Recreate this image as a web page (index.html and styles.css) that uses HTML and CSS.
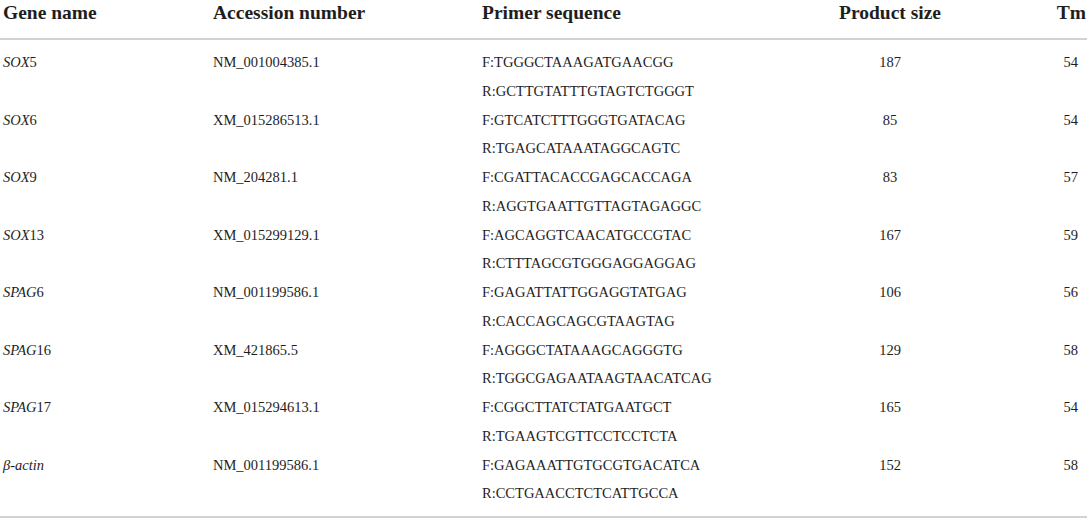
FILE: index.html
```html
<!DOCTYPE html>
<html>
<head>
<meta charset="utf-8">
<link rel="stylesheet" href="styles.css">
</head>
<body>
<div class="tbl">
  <div class="row head">
    <div class="c1">Gene name</div>
    <div class="c2">Accession number</div>
    <div class="c3">Primer sequence</div>
    <div class="c4">Product size</div>
    <div class="c5">Tm</div>
  </div>
  <div class="body">
    <div class="row">
      <div class="c1"><i>SOX</i>5</div>
      <div class="c2">NM_001004385.1</div>
      <div class="c3"><div>F:TGGGCTAAAGATGAACGG</div><div>R:GCTTGTATTTGTAGTCTGGGT</div></div>
      <div class="c4">187</div>
      <div class="c5">54</div>
    </div>
    <div class="row">
      <div class="c1"><i>SOX</i>6</div>
      <div class="c2">XM_015286513.1</div>
      <div class="c3"><div>F:GTCATCTTTGGGTGATACAG</div><div>R:TGAGCATAAATAGGCAGTC</div></div>
      <div class="c4">85</div>
      <div class="c5">54</div>
    </div>
    <div class="row">
      <div class="c1"><i>SOX</i>9</div>
      <div class="c2">NM_204281.1</div>
      <div class="c3"><div>F:CGATTACACCGAGCACCAGA</div><div>R:AGGTGAATTGTTAGTAGAGGC</div></div>
      <div class="c4">83</div>
      <div class="c5">57</div>
    </div>
    <div class="row">
      <div class="c1"><i>SOX</i>13</div>
      <div class="c2">XM_015299129.1</div>
      <div class="c3"><div>F:AGCAGGTCAACATGCCGTAC</div><div>R:CTTTAGCGTGGGAGGAGGAG</div></div>
      <div class="c4">167</div>
      <div class="c5">59</div>
    </div>
    <div class="row">
      <div class="c1"><i>SPAG</i>6</div>
      <div class="c2">NM_001199586.1</div>
      <div class="c3"><div>F:GAGATTATTGGAGGTATGAG</div><div>R:CACCAGCAGCGTAAGTAG</div></div>
      <div class="c4">106</div>
      <div class="c5">56</div>
    </div>
    <div class="row">
      <div class="c1"><i>SPAG</i>16</div>
      <div class="c2">XM_421865.5</div>
      <div class="c3"><div>F:AGGGCTATAAAGCAGGGTG</div><div>R:TGGCGAGAATAAGTAACATCAG</div></div>
      <div class="c4">129</div>
      <div class="c5">58</div>
    </div>
    <div class="row">
      <div class="c1"><i>SPAG</i>17</div>
      <div class="c2">XM_015294613.1</div>
      <div class="c3"><div>F:CGGCTTATCTATGAATGCT</div><div>R:TGAAGTCGTTCCTCCTCTA</div></div>
      <div class="c4">165</div>
      <div class="c5">54</div>
    </div>
    <div class="row">
      <div class="c1"><i>β-actin</i></div>
      <div class="c2">NM_001199586.1</div>
      <div class="c3"><div>F:GAGAAATTGTGCGTGACATCA</div><div>R:CCTGAACCTCTCATTGCCA</div></div>
      <div class="c4">152</div>
      <div class="c5">58</div>
    </div>
  </div>
</div>
</body>
</html>
```

FILE: styles.css
```css
html, body {
  margin: 0;
  padding: 0;
  background: #ffffff;
}
body {
  font-family: "Liberation Serif", "Times New Roman", serif;
  color: #1e1e1e;
}
.tbl {
  width: 1087px;
  border-bottom: 2px solid #d2d2d2;
}
.row {
  display: grid;
  grid-template-columns: 210px 269px 301px 220px 87px;
  align-items: start;
}
.head {
  font-weight: bold;
  font-size: 19.5px;
  line-height: 22px;
  padding: 2px 0 14px;
  border-bottom: 2px solid #d2d2d2;
}
.body {
  padding: 8px 0;
  font-size: 14.5px;
  line-height: 28.75px;
}
.c1, .c2, .c3 {
  padding-left: 3px;
}
.c4 {
  text-align: center;
}
.c5 {
  text-align: right;
  padding-right: 1px;
}
.body .c5 {
  padding-right: 9px;
}
```
